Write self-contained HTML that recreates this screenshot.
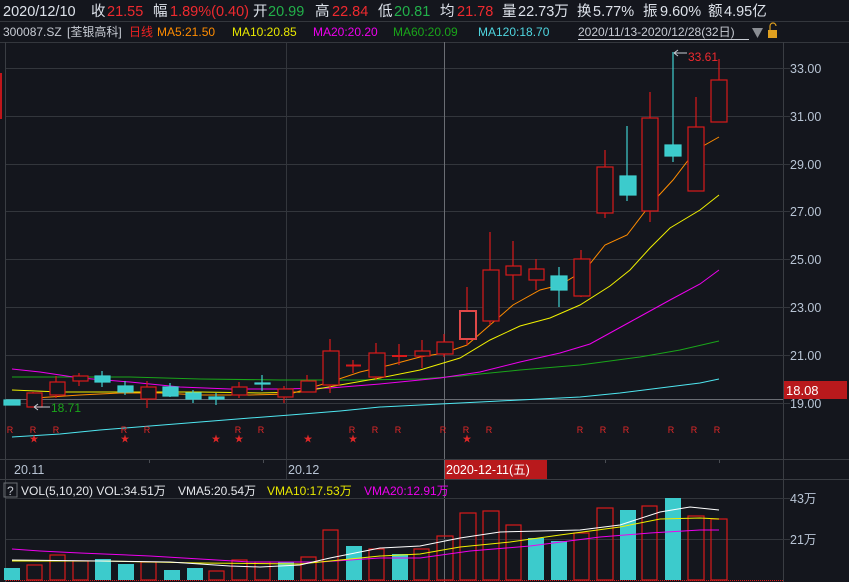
<!DOCTYPE html>
<html><head><meta charset="utf-8"><style>
html,body{margin:0;padding:0;background:#14161d;}
svg{display:block;font-family:"Liberation Sans","Noto Sans CJK SC",sans-serif;}
</style></head><body>
<svg width="849" height="582" viewBox="0 0 849 582" xmlns="http://www.w3.org/2000/svg">
<rect width="849" height="582" fill="#14161d"/>
<!-- header row 1 -->
<g font-size="14.5">
<text x="3" y="16" fill="#dde2ea">2020/12/10</text>
<text x="91" y="16" fill="#dde2ea">收</text><text x="107" y="16" fill="#ee2a2f">21.55</text>
<text x="153" y="16" fill="#dde2ea">幅</text><text x="170" y="16" fill="#ee2a2f">1.89%(0.40)</text>
<text x="253" y="16" fill="#dde2ea">开</text><text x="268" y="16" fill="#22b04a">20.99</text>
<text x="315" y="16" fill="#dde2ea">高</text><text x="332" y="16" fill="#ee2a2f">22.84</text>
<text x="378" y="16" fill="#dde2ea">低</text><text x="394" y="16" fill="#22b04a">20.81</text>
<text x="440" y="16" fill="#dde2ea">均</text><text x="457" y="16" fill="#ee2a2f">21.78</text>
<text x="502" y="16" fill="#dde2ea">量</text><text x="518" y="16" fill="#dde2ea">22.73万</text>
<text x="577" y="16" fill="#dde2ea">换</text><text x="593" y="16" fill="#dde2ea">5.77%</text>
<text x="643" y="16" fill="#dde2ea">振</text><text x="660" y="16" fill="#dde2ea">9.60%</text>
<text x="708" y="16" fill="#dde2ea">额</text><text x="724" y="16" fill="#dde2ea">4.95亿</text>
</g>
<line x1="0" y1="21.5" x2="849" y2="21.5" stroke="#34373d"/>
<g font-size="12">
<text x="3" y="36" fill="#c8ccd4">300087.SZ</text>
<text x="67" y="36" fill="#c8ccd4">[荃银高科]</text>
<text x="129" y="36" fill="#ee2222">日线</text>
<text x="157" y="36" fill="#ff8c00">MA5:21.50</text>
<text x="232" y="36" fill="#e8e800">MA10:20.85</text>
<text x="313" y="36" fill="#ee00ee">MA20:20.20</text>
<text x="393" y="36" fill="#1aa51a">MA60:20.09</text>
<text x="478" y="36" fill="#4fd6e0">MA120:18.70</text>
<text x="578" y="36" fill="#c8ccd4">2020/11/13-2020/12/28(32日)</text>
</g>
<line x1="578" y1="39.5" x2="749" y2="39.5" stroke="#c8ccd4"/>
<polygon points="752,28 763,28 757.5,38" fill="#8a8d93"/>
<rect x="768" y="30" width="9" height="8" fill="#e0a020"/>
<path d="M770 30 V26 a3 3 0 0 1 6 0" fill="none" stroke="#e0a020" stroke-width="1.2"/>
<!-- frame -->
<line x1="0" y1="42.5" x2="849" y2="42.5" stroke="#34373d"/>
<line x1="5.5" y1="42" x2="5.5" y2="582" stroke="#3a3d43"/>
<line x1="783.5" y1="42" x2="783.5" y2="582" stroke="#3a3d43"/>
<rect x="0" y="73" width="2" height="46" fill="#c0161b"/>
<!-- grid -->
<g stroke="#33363c">
<line x1="6" y1="68.5" x2="790" y2="68.5"/><line x1="6" y1="116.5" x2="790" y2="116.5"/>
<line x1="6" y1="164.5" x2="790" y2="164.5"/><line x1="6" y1="211.5" x2="790" y2="211.5"/>
<line x1="6" y1="259.5" x2="790" y2="259.5"/><line x1="6" y1="307.5" x2="790" y2="307.5"/>
<line x1="6" y1="355.5" x2="790" y2="355.5"/><line x1="6" y1="403.5" x2="790" y2="403.5"/>
<line x1="286.5" y1="42" x2="286.5" y2="480"/>
</g>
<line x1="6" y1="399.5" x2="783" y2="399.5" stroke="#6a6d73"/>
<line x1="444.5" y1="42" x2="444.5" y2="582" stroke="#6a6d73"/>
<!-- right axis -->
<g font-size="12.5" fill="#b8c4d4">
<text x="790" y="73">33.00</text><text x="790" y="121">31.00</text><text x="790" y="169">29.00</text>
<text x="790" y="216">27.00</text><text x="790" y="264">25.00</text><text x="790" y="312">23.00</text>
<text x="790" y="360">21.00</text><text x="790" y="408">19.00</text>
</g>
<rect x="784" y="381" width="63" height="18" fill="#b8191c"/>
<text x="786" y="395" font-size="13" fill="#fff">18.08</text>
<!-- MA lines -->
<g fill="none" stroke-width="1">
<polyline stroke="#4fe6f0" points="12,437 60,434 100,430 150,426 200,422 250,418 290,415 340,411 380,407 440,404 480,402 520,400 580,397 620,393 660,388 700,383 719,379"/>
<polyline stroke="#1aa51a" points="12,377 60,377 130,377 200,379 280,380 360,380 420,379 460,376 520,370 580,365 640,357 680,350 719,341"/>
<polyline stroke="#ee00ee" points="12,369 40,372 80,378 130,382 180,387 230,389 280,389 330,388 380,384 440,378 480,372 520,362 560,353 590,344 630,322 670,300 700,284 719,270"/>
<polyline stroke="#f0f000" points="12,390 60,392 130,392 200,392 260,393 300,392 340,385 380,378 420,370 460,358 490,340 520,326 550,318 580,305 610,286 630,270 650,248 670,228 700,210 719,195"/>
<polyline stroke="#ff8c00" points="35,398 80,395 120,393 160,393 200,395 250,395 290,394 310,388 330,382 360,372 390,365 420,357 444,353 467,345 490,325 513,305 540,290 560,285 585,270 605,245 627,235 650,205 673,180 696,150 719,137"/>
</g>
<!-- candles -->
<g stroke-width="1.2">
<g stroke="#40d0d0" fill="#3ccbcc">
<rect x="4" y="400" width="16" height="5"/>
<line x1="102" y1="371" x2="102" y2="387"/><rect x="95" y="376" width="15" height="6"/>
<line x1="125" y1="381" x2="125" y2="395"/><rect x="118" y="386" width="15" height="6"/>
<line x1="170" y1="383" x2="170" y2="397"/><rect x="163" y="387" width="15" height="9"/>
<line x1="193" y1="390" x2="193" y2="403"/><rect x="186" y="393" width="15" height="6"/>
<line x1="216" y1="393" x2="216" y2="405"/><rect x="209" y="397" width="15" height="2"/>
<line x1="262" y1="375" x2="262" y2="391"/><rect x="255" y="383" width="15" height="1"/>
<line x1="559" y1="267" x2="559" y2="307"/><rect x="551" y="276" width="16" height="14"/>
<line x1="627" y1="126" x2="627" y2="201"/><rect x="620" y="176" width="16" height="19"/>
<line x1="673" y1="52" x2="673" y2="162"/><rect x="665" y="145" width="16" height="11"/>
</g>
<g stroke="#d81a1a" fill="none">
<line x1="33" y1="392" x2="33" y2="407"/><rect x="27" y="393" width="15" height="14" fill="#14161d"/>
<line x1="56" y1="376" x2="56" y2="398"/><rect x="50" y="382" width="15" height="13" fill="#14161d"/>
<line x1="79" y1="373" x2="79" y2="386"/><rect x="73" y="376" width="15" height="5" fill="#14161d"/>
<line x1="147" y1="381" x2="147" y2="408"/><rect x="141" y="387" width="15" height="12" fill="#14161d"/>
<line x1="239" y1="382" x2="239" y2="398"/><rect x="232" y="387" width="15" height="8" fill="#14161d"/>
<line x1="284" y1="386" x2="284" y2="403"/><rect x="278" y="389" width="15" height="8" fill="#14161d"/>
<line x1="307" y1="375" x2="307" y2="392"/><rect x="301" y="381" width="15" height="11" fill="#14161d"/>
<line x1="330" y1="339" x2="330" y2="393"/><rect x="323" y="351" width="16" height="34" fill="#14161d"/>
<line x1="353" y1="360" x2="353" y2="373"/><line x1="346" y1="365.5" x2="361" y2="365.5" stroke-width="2"/>
<line x1="376" y1="343" x2="376" y2="380"/><rect x="369" y="353" width="16" height="24" fill="#14161d"/>
<line x1="399" y1="344" x2="399" y2="365"/><line x1="392" y1="356" x2="407" y2="356" stroke-width="2"/>
<line x1="422" y1="340" x2="422" y2="368"/><rect x="415" y="351" width="15" height="5" fill="#14161d"/>
<line x1="444" y1="334" x2="444" y2="357"/><rect x="437" y="342" width="16" height="12" fill="#14161d"/>
<line x1="467" y1="287" x2="467" y2="345"/><rect x="460" y="311" width="16" height="28" fill="#14161d" stroke="#e04848" stroke-width="2"/>
<line x1="490" y1="232" x2="490" y2="325"/><rect x="483" y="270" width="16" height="51" fill="#14161d"/>
<line x1="513" y1="241" x2="513" y2="300"/><rect x="506" y="266" width="15" height="9" fill="#14161d"/>
<line x1="536" y1="259" x2="536" y2="290"/><rect x="529" y="269" width="15" height="11" fill="#14161d"/>
<line x1="581" y1="250" x2="581" y2="297"/><rect x="574" y="259" width="16" height="37" fill="#14161d"/>
<line x1="605" y1="150" x2="605" y2="218"/><rect x="597" y="167" width="16" height="46" fill="#14161d"/>
<line x1="650" y1="92" x2="650" y2="222"/><rect x="642" y="118" width="16" height="93" fill="#14161d"/>
<line x1="696" y1="97" x2="696" y2="191"/><rect x="688" y="127" width="16" height="64" fill="#14161d"/>
<line x1="719" y1="59" x2="719" y2="80"/><rect x="711" y="80" width="16" height="42" fill="#14161d"/>
</g>
</g>
<!-- labels -->
<path d="M34 407 H50 M34 407 l4 -3 M34 407 l4 3" stroke="#c8ccd4" fill="none"/>
<text x="51" y="412" font-size="12" fill="#1aa51a">18.71</text>
<path d="M674 53 H687 M674 53 l4 -3 M674 53 l4 3" stroke="#c8ccd4" fill="none"/>
<text x="688" y="61" font-size="12" fill="#ee2a2f">33.61</text>
<!-- R markers -->
<g font-size="9" fill="#e02828" text-anchor="middle">
<text x="10" y="433">R</text><text x="33" y="433">R</text><text x="56" y="433">R</text>
<text x="124" y="433">R</text><text x="147" y="433">R</text><text x="238" y="433">R</text><text x="261" y="433">R</text>
<text x="352" y="433">R</text><text x="375" y="433">R</text><text x="398" y="433">R</text>
<text x="443" y="433">R</text><text x="466" y="433">R</text><text x="489" y="433">R</text>
<text x="580" y="433">R</text><text x="603" y="433">R</text><text x="626" y="433">R</text>
<text x="671" y="433">R</text><text x="694" y="433">R</text><text x="717" y="433">R</text>
<text x="34" y="442">★</text><text x="125" y="442">★</text><text x="216" y="442">★</text><text x="239" y="442">★</text>
<text x="308" y="442">★</text><text x="353" y="442">★</text><text x="467" y="442">★</text>
</g>
<!-- date axis -->
<line x1="0" y1="459.5" x2="849" y2="459.5" stroke="#3a3d43"/>
<line x1="0" y1="479.5" x2="849" y2="479.5" stroke="#3a3d43"/>
<g stroke="#4a4d53"><line x1="149.5" y1="460" x2="149.5" y2="463"/><line x1="263.5" y1="460" x2="263.5" y2="463"/><line x1="605.5" y1="460" x2="605.5" y2="463"/><line x1="719.5" y1="460" x2="719.5" y2="463"/></g>
<text x="14" y="474" font-size="12.5" fill="#b8c4d4">20.11</text>
<text x="288" y="474" font-size="12.5" fill="#b8c4d4">20.12</text>
<rect x="445" y="460" width="102" height="19" fill="#b8191c"/>
<text x="446" y="474" font-size="12.5" fill="#fff">2020-12-11(五)</text>
<!-- volume header -->
<rect x="4" y="483" width="13" height="14" fill="none" stroke="#6a6d73"/>
<text x="7" y="495" font-size="12" fill="#c8ccd4">?</text>
<g font-size="12">
<text x="21" y="495" fill="#e6e8ec">VOL(5,10,20) VOL:34.51万</text>
<text x="178" y="495" fill="#e6e8ec">VMA5:20.54万</text>
<text x="267" y="495" fill="#e8e800">VMA10:17.53万</text>
<text x="364" y="495" fill="#ee00ee">VMA20:12.91万</text>
</g>
<line x1="6" y1="498.5" x2="790" y2="498.5" stroke="#33363c"/>
<line x1="6" y1="539.5" x2="790" y2="539.5" stroke="#33363c"/>
<g font-size="12.5" fill="#b8c4d4"><text x="790" y="503">43万</text><text x="790" y="544">21万</text></g>
<!-- volume bars -->
<g fill="#3ccbcc">
<rect x="4" y="568" width="16" height="12"/><rect x="95" y="559" width="16" height="21"/>
<rect x="118" y="564" width="16" height="16"/><rect x="164" y="570" width="16" height="10"/>
<rect x="187" y="568" width="16" height="12"/><rect x="278" y="562" width="16" height="18"/>
<rect x="346" y="546" width="16" height="34"/><rect x="392" y="554" width="16" height="26"/>
<rect x="528" y="538" width="16" height="42"/><rect x="551" y="541" width="16" height="39"/>
<rect x="620" y="510" width="16" height="70"/><rect x="665" y="498" width="16" height="82"/>
</g>
<g fill="none" stroke="#d81a1a" stroke-width="1.2">
<rect x="27" y="565" width="15" height="15"/><rect x="50" y="555" width="15" height="25"/>
<rect x="73" y="561" width="15" height="19"/><rect x="141" y="562" width="15" height="18"/>
<rect x="209" y="571" width="15" height="9"/><rect x="232" y="560" width="15" height="20"/>
<rect x="255" y="562" width="15" height="18"/><rect x="301" y="557" width="15" height="23"/>
<rect x="323" y="530" width="15" height="50"/><rect x="369" y="549" width="15" height="31"/>
<rect x="414" y="549" width="15" height="31"/><rect x="437" y="536" width="16" height="44"/>
<rect x="460" y="513" width="16" height="67"/><rect x="483" y="511" width="16" height="69"/>
<rect x="506" y="525" width="15" height="55"/><rect x="574" y="533" width="15" height="47"/>
<rect x="597" y="508" width="16" height="72"/><rect x="642" y="506" width="15" height="74"/>
<rect x="688" y="516" width="16" height="64"/><rect x="711" y="519" width="16" height="61"/>
</g>
<line x1="6" y1="580.5" x2="783" y2="580.5" stroke="#d81a1a" stroke-dasharray="1,1"/>
<g fill="none" stroke-width="1">
<polyline stroke="#ee00ee" points="12,549 40,551 80,553 150,556 200,559 250,562 320,562 380,558 420,558 470,551 530,546 600,537 650,533 700,530 719,530"/>
<polyline stroke="#f0f000" points="12,561 100,561 200,563 300,564 330,561 380,556 420,554 460,547 510,542 560,535 620,527 660,519 700,518 719,519"/>
<polyline stroke="#ffffff" points="12,560 100,561 170,562 200,564 230,566 260,567 300,565 330,558 380,548 420,546 460,538 500,532 540,531 580,530 620,525 660,512 690,507 719,510"/>
</g>
</svg>
</body></html>
